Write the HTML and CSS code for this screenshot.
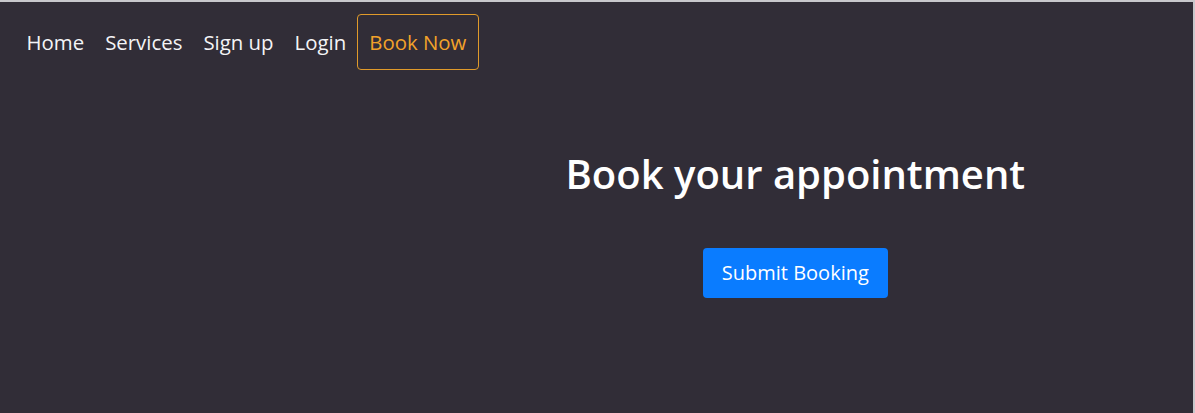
FILE: index.html
```html
<!DOCTYPE html>
<html>
<head>
<meta charset="utf-8">
<link rel="stylesheet" href="styles.css">
</head>
<body>
<div class="frame">
  <nav class="nav">
    <a class="nav-link" href="#">Home</a>
    <a class="nav-link" href="#">Services</a>
    <a class="nav-link" href="#">Sign up</a>
    <a class="nav-link" href="#">Login</a>
    <a class="nav-link book" href="#">Book Now</a>
  </nav>
  <main class="main">
    <section class="content">
      <h1 class="title">Book your appointment</h1>
      <button class="submit" type="button">Submit Booking</button>
    </section>
  </main>
</div>
</body>
</html>
```
FILE: styles.css
```css
html, body {
  margin: 0;
  padding: 0;
  height: 100%;
}
body {
  background: #c8c8cc;
  font-family: "Open Sans", "Noto Sans", sans-serif;
}
.frame {
  margin-top: 2px;
  margin-right: 2px;
  height: calc(100% - 2px);
  background: #312d37;
  box-sizing: border-box;
}
.nav {
  display: flex;
  align-items: center;
  padding: 12px 0 0 16px;
}
.nav-link {
  color: #f4f4f6;
  text-decoration: none;
  font-size: 20.4px;
  padding: 12px 10.5px;
  line-height: 30px;
}
.nav-link.book {
  color: #f2a22a;
  border: 1px solid #e09a2a;
  border-radius: 4px;
  padding: 12px 11.5px;
}
.main {
  display: grid;
  grid-template-columns: 4fr 8fr;
}
.content {
  grid-column: 2;
  display: flex;
  flex-direction: column;
  align-items: center;
}
.title {
  color: #ffffff;
  font-size: 40px;
  font-weight: 600;
  margin: 80px 0 0;
  line-height: 48px;
}
.submit {
  margin-top: 50px;
  background: #0a7cff;
  color: #fff;
  border: none;
  border-radius: 4px;
  font-family: inherit;
  font-size: 20px;
  padding: 9px 19px;
  line-height: 32px;
}
```
